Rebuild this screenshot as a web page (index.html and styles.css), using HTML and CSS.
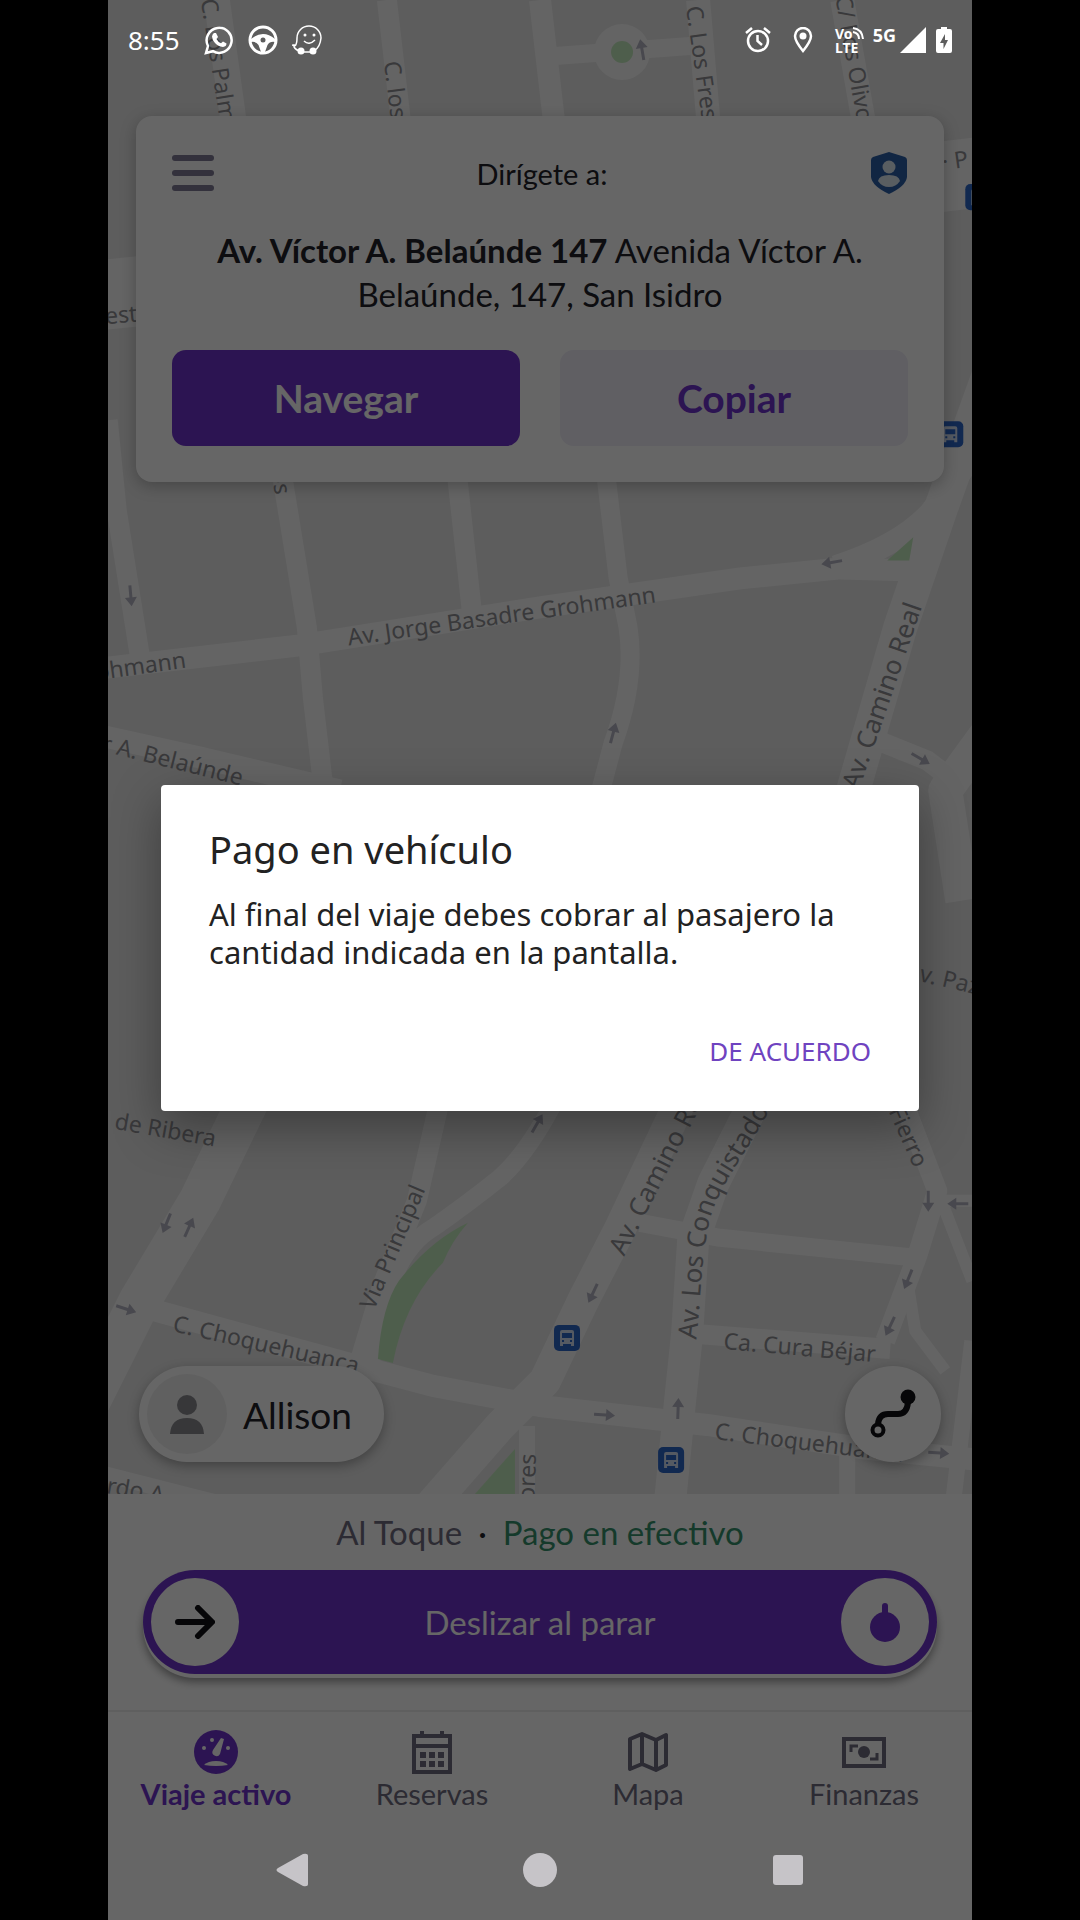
FILE: index.html
```html
<!DOCTYPE html>
<html lang="es">
<head>
    <meta charset="UTF-8">
    <meta name="viewport" content="width=device-width, initial-scale=1.0">
    <title>Viaje activo</title>
    <link rel="stylesheet" href="styles.css">
</head>
<body>
    <div class="phone">
        <section class="map-area">
            <svg class="map" viewBox="108 0 864 1493" preserveAspectRatio="xMidYMin slice" aria-hidden="true">
                <defs>
                    <path id="arrow" d="M-10 -1.500H2V-6L11 0L2 6V1.500H-10Z"/>
                    <g id="bus">
                        <rect width="26" height="26" rx="5" fill="#2c66c8"/>
                        <path d="M6 7q0-2 2-2h10q2 0 2 2v14h-3v-2H9v2H6z" fill="#d4e0f4"/>
                        <path d="M8 8h10v5H8zM8 15h2v2H8zM16 15h2v2h-2z" fill="#2c66c8"/>
                    </g>
                    <path id="conquistadores" d="M696 1339C701 1300 700 1265 709 1222C718 1185 745 1155 768 1112L810 1030"/>
                </defs>
                <!-- Streets -->
                <g class="roads">
                    <path stroke-width="22" d="M100 668L300 645L540 607L740 578L840 568L915 570"/>
                    <path stroke-width="22" d="M835 566Q900 545 930 512L985 440"/>
                    <path stroke-width="20" d="M108 420L117 510L140 655"/>
                    <path stroke-width="20" d="M270 400L288 510L307 627L313 697L325 800"/>
                    <path stroke-width="26" d="M217 0L235 130"/>
                    <path stroke-width="20" d="M387 0L402 130M452 430L458 483L472 612"/>
                    <path stroke-width="22" d="M540 0L555 130"/>
                    <path stroke-width="19" d="M603 450L618 577L628 627Q636 680 613 743L598 800"/>
                    <path stroke-width="18" d="M555 56L690 46"/>
                    <path stroke-width="24" d="M698 0L709 130M842 0L865 130"/>
                    <path stroke-width="70" d="M930 178L980 172M100 295L150 290"/>
                    <path stroke-width="34" d="M990 370L940 510L900 627L850 800"/>
                    <path stroke-width="22" d="M100 735L200 757L340 790"/>
                    <path stroke-width="20" d="M880 741L927 760L960 785"/>
                    <path stroke-width="34" d="M985 735L945 790L962 900"/>
                    <path stroke-width="32" d="M690 1080L620 1228L583 1300L545 1380L500 1425L430 1505"/>
                    <path stroke-width="32" d="M765 1080L713 1183L693 1240L687 1333L680 1400L670 1500"/>
                    <path stroke-width="18" d="M640 1222L720 1237L917 1257"/>
                    <path stroke-width="20" d="M695 1333L890 1348"/>
                    <path stroke-width="22" d="M120 1300L350 1363L433 1385L540 1405L707 1424L860 1447L980 1459"/>
                    <path stroke-width="42" d="M258 1080L200 1200L140 1300L90 1400"/>
                    <path stroke-width="20" d="M442 1090L417 1200L383 1283L357 1370"/>
                    <path stroke-width="18" d="M560 1090Q530 1150 500 1177Q465 1205 433 1227Q385 1255 370 1370"/>
                    <path stroke-width="20" d="M895 1080L937 1190L917 1255L885 1340"/>
                    <path stroke-width="12" d="M940 1200H980M943 1205L972 1280M907 1280L915 1330L945 1370"/>
                    <path stroke-width="16" d="M972 1340L953 1500M100 1472L230 1505M527 1425V1500M847 1450V1500"/>
                </g>
                <circle cx="622" cy="52" r="28" fill="#fafafa"/>
                <g fill="#c4ebbe">
                    <circle cx="622" cy="52" r="11"/>
                    <path d="M468 1222Q452 1240 443 1262Q405 1300 393 1362L378 1358Q382 1305 399 1280Q430 1240 468 1222Z"/>
                    <path d="M515 1448V1493H475Z"/>
                    <path d="M913 537L909 560H887Z"/>
                </g>
                <g fill="#b4b4c2">
                    <use href="#arrow" transform="translate(131 595) rotate(85)"/>
                    <use href="#arrow" transform="translate(832 562) rotate(170)"/>
                    <use href="#arrow" transform="translate(613 733) rotate(-75)"/>
                    <use href="#arrow" transform="translate(920 758) rotate(30)"/>
                    <use href="#arrow" transform="translate(167 1222) rotate(112)"/>
                    <use href="#arrow" transform="translate(189 1227) rotate(-66)"/>
                    <use href="#arrow" transform="translate(126 1308) rotate(18)"/>
                    <use href="#arrow" transform="translate(593 1292) rotate(115)"/>
                    <use href="#arrow" transform="translate(604 1414) rotate(4)"/>
                    <use href="#arrow" transform="translate(678 1408) rotate(-88)"/>
                    <use href="#arrow" transform="translate(928 1200) rotate(90)"/>
                    <use href="#arrow" transform="translate(958 1203) rotate(180)"/>
                    <use href="#arrow" transform="translate(908 1278) rotate(112)"/>
                    <use href="#arrow" transform="translate(890 1325) rotate(115)"/>
                    <use href="#arrow" transform="translate(938 1452) rotate(4)"/>
                    <use href="#arrow" transform="translate(642 50) rotate(-100)"/>
                    <use href="#arrow" transform="translate(537 1123) rotate(-60)"/>
                </g>
                <!-- Street names -->
                <g class="labels">
                    <text transform="translate(201 0) rotate(81)">C. Los Palmeras</text>
                    <text transform="translate(384 62) rotate(83)">C. los</text>
                    <text transform="translate(686 7) rotate(82)">C. Los Fresnos</text>
                    <text transform="translate(835 -3) rotate(80)">C/ Los Olivos</text>
                    <text transform="translate(943 170) rotate(-8)">· P</text>
                    <text transform="translate(106 324) rotate(-5)">est</text>
                    <text transform="translate(272 470) rotate(83)">os</text>
                    <text transform="translate(349 645) rotate(-8)">Av. Jorge Basadre Grohmann</text>
                    <text text-anchor="end" transform="translate(187 667) rotate(-8)">Grohmann</text>
                    <text text-anchor="end" transform="translate(241 785) rotate(14)">Víctor A. Belaúnde</text>
                    <text class="avenue" text-anchor="end" transform="translate(922 606) rotate(-71)">Av. Camino Real</text>
                    <text transform="translate(904 977) rotate(13)">Av. Paz</text>
                    <text transform="translate(114 1128) rotate(10)">de Ribera</text>
                    <text transform="translate(374 1310) rotate(-67)">Via Principal</text>
                    <text transform="translate(172 1330) rotate(13)">C. Choquehuanca</text>
                    <text class="avenue" transform="translate(624 1256) rotate(-63)">Av. Camino Real</text>
                    <text class="avenue"><textPath href="#conquistadores">Av. Los Conquistadores</textPath></text>
                    <text transform="translate(723 1348) rotate(5)">Ca. Cura Béjar</text>
                    <text transform="translate(714 1438) rotate(7)">C. Choquehuanca</text>
                    <text text-anchor="end" transform="translate(914 1168) rotate(66)">Fierro</text>
                    <text text-anchor="end" transform="translate(536 1453) rotate(-88)">Flores</text>
                    <text transform="translate(106 1492) rotate(10)">rdo A</text>
                </g>
                <use href="#bus" x="965" y="184"/>
                <use href="#bus" x="937" y="421"/>
                <use href="#bus" x="554" y="1324"/>
                <use href="#bus" x="658" y="1446"/>
            </svg>

            <div class="status-bar">
                <span class="time">8:55</span>
                <svg width="30" height="30" viewBox="0 0 30 30" fill="none" stroke="#fff" stroke-width="2.500">
                    <path d="M2 28L4 21A12.500 12.500 0 1 1 9 26.200Z"/>
                    <path d="M10 8l2 0 2 4-1.500 2q1.500 3 4.500 4.300l2-1.800 3.500 2q0 3-3.500 3.500-5-.5-8-4t-3-6.500q.5-3 2-3.500z" fill="#fff" stroke="none"/>
                </svg>
                <svg width="30" height="30" viewBox="0 0 30 30">
                    <circle cx="15" cy="15" r="13" fill="none" stroke="#fff" stroke-width="3"/>
                    <path d="M3 14Q9 9 15 9T27 14V17Q22 16 19.500 20L17 27H13L10.500 20Q8 16 3 17Z" fill="#fff"/>
                    <circle cx="15" cy="15" r="2.500" fill="#5d5d5d"/>
                </svg>
                <svg width="30" height="30" viewBox="0 0 30 30">
                    <path d="M3 21Q5 19 5 13A12 12 0 0 1 29 13Q28 22 23 25M3 21Q-1 20 2 20Q1 23 7 26M12 27H19" fill="none" stroke="#fff" stroke-width="1.500"/>
                    <circle cx="13" cy="10" r="1.500" fill="#fff"/>
                    <circle cx="22" cy="10" r="1.500" fill="#fff"/>
                    <path d="M12 16Q17 21 23 15" fill="none" stroke="#fff" stroke-width="1.500"/>
                    <circle cx="9" cy="26" r="3.500" fill="#fff"/>
                    <circle cx="21" cy="26" r="3.500" fill="#fff"/>
                </svg>
                <span class="spacer"></span>
                <svg class="alarm" width="26" height="28" viewBox="0 0 26 28" fill="none" stroke="#fff" stroke-width="2.500">
                    <circle cx="13" cy="15" r="10"/>
                    <path d="M12.500 9V15L17 19M1 7L7 2M25 7L19 2"/>
                </svg>
                <svg class="pin" width="20" height="26" viewBox="0 0 20 26">
                    <path d="M10 24Q2 14 2 9A8 8 0 0 1 18 9Q18 14 10 24Z" fill="none" stroke="#fff" stroke-width="2.500"/>
                    <circle cx="10" cy="9" r="3.500" fill="#fff"/>
                </svg>
                <svg width="28" height="28" viewBox="0 0 28 28" class="volte">
                    <text x="0" y="13">Vo</text>
                    <text x="0" y="27">LTE</text>
                    <path d="M18 6Q24 7 24 13M18 2Q27 3 28 13" fill="none" stroke="#fff" stroke-width="2"/>
                </svg>
                <span class="network">5G</span>
                <svg width="26" height="26" viewBox="0 0 26 26"><path d="M26 0V26H0Z" fill="#fff"/></svg>
                <svg class="battery" width="16" height="26" viewBox="0 0 16 26">
                    <path d="M5 0h6v2h3q2 0 2 2v20q0 2-2 2H2q-2 0-2-2V4q0-2 2-2h3z" fill="#fff"/>
                    <path d="M9 7L4 16H7.500V22L12 13H9Z" fill="#5d5d5d"/>
                </svg>
            </div>

            <div class="card">
                <div class="card-header">
                    <button class="icon-button menu" aria-label="Menú"><span></span><span></span><span></span></button>
                    <span class="card-title">Dirígete a:</span>
                    <button class="icon-button" aria-label="Seguridad">
                        <svg width="38" height="42" viewBox="-1 0 38 42">
                            <path d="M18 0L34 5Q36 6 36 8V25Q35 34 18 42Q1 34 0 25V8Q0 6 2 5Z" fill="#2c5fa8"/>
                            <circle cx="18" cy="15" r="6.500" fill="#dfeaf2"/>
                            <path d="M7 29Q8 23 18 23T29 29Q25 35 18 35T7 29Z" fill="#dfeaf2"/>
                        </svg>
                    </button>
                </div>
                <p class="address"><b>Av. Víctor A. Belaúnde 147</b> Avenida Víctor A. Belaúnde, 147, San Isidro</p>
                <div class="card-buttons">
                    <button class="primary">Navegar</button>
                    <button class="secondary">Copiar</button>
                </div>
            </div>

            <div class="map-footer">
                <button class="passenger">
                    <span class="avatar">
                        <svg width="36" height="40" viewBox="0 0 36 40" fill="#8a8a8f">
                            <circle cx="18" cy="11" r="10"/>
                            <path d="M1 40Q2 24 18 24T35 40Z"/>
                        </svg>
                    </span>
                    Allison
                </button>
                <button class="route" aria-label="Ruta">
                    <svg width="48" height="50" viewBox="0 0 48 50" fill="none" stroke="#101014" stroke-width="6">
                        <circle cx="9" cy="41" r="5.500" stroke-width="4"/>
                        <path d="M9 35Q10 25 19 25H29Q38 25 39 13"/>
                        <circle cx="39" cy="8" r="7.500" fill="#101014" stroke="none"/>
                    </svg>
                </button>
            </div>
        </section>

        <section class="trip">
            <p class="trip-info"><span>Al Toque</span><span class="dot">·</span><span class="cash">Pago en efectivo</span></p>
            <button class="slider">
                <span class="knob">
                    <svg width="40" height="34" viewBox="0 0 40 34" fill="none" stroke="#101014" stroke-width="6" stroke-linecap="round" stroke-linejoin="round">
                        <path d="M3 17H36M23 3L37 17L23 31"/>
                    </svg>
                </span>
                <span>Deslizar al parar</span>
                <span class="knob">
                    <svg width="32" height="40" viewBox="0 0 32 40" fill="#6f33cc">
                        <circle cx="16" cy="25" r="15"/>
                        <rect x="13" y="1" width="6" height="14" rx="3"/>
                    </svg>
                </span>
            </button>
        </section>

        <nav class="tabs">
            <a href="#" class="tab active">
                <svg width="44" height="44" viewBox="0 0 44 44">
                    <circle cx="22" cy="22" r="22" fill="#6f33cc"/>
                    <g fill="#fff">
                        <path d="M27 8L30 9L26 24A4 4 0 1 1 19 20Z"/>
                        <circle cx="10" cy="18" r="2"/><circle cx="18" cy="10" r="2"/><circle cx="34" cy="18" r="2"/>
                        <path d="M10 35Q14 31 22 31T34 35Q22 37 10 35Z"/>
                    </g>
                </svg>
                Viaje activo
            </a>
            <a href="#" class="tab">
                <svg width="44" height="44" viewBox="0 0 44 44" fill="none" stroke="#6f6c80" stroke-width="4">
                    <path d="M4 6H40V42H4ZM4 16H40M12 1V6M32 1V6"/>
                    <path d="M10 25H34M10 34H34" stroke-width="6" stroke-dasharray="6 3"/>
                </svg>
                Reservas
            </a>
            <a href="#" class="tab">
                <svg width="44" height="44" viewBox="0 0 44 44" fill="none" stroke="#6f6c80" stroke-width="4" stroke-linejoin="round">
                    <path d="M4 9L16 4L30 10L40 5V35L30 40L16 34L4 39ZM16 4V34M30 10V40"/>
                </svg>
                Mapa
            </a>
            <a href="#" class="tab">
                <svg width="44" height="44" viewBox="0 0 44 44" fill="none" stroke="#6f6c80" stroke-width="4">
                    <rect x="2" y="9" width="40" height="27"/>
                    <path d="M9 22V16H16M35 23V29H28" stroke-width="3"/>
                    <circle cx="22" cy="22" r="6" fill="#6f6c80" stroke="none"/>
                </svg>
                Finanzas
            </a>
        </nav>

        <div class="system-nav">
            <button aria-label="Atrás"><svg width="32" height="34" viewBox="0 0 32 34"><path d="M27 1Q32 0 32 3V31Q32 34 27 33L2 19Q-1 17 2 15Z"/></svg></button>
            <button aria-label="Inicio"><svg width="34" height="34" viewBox="0 0 34 34"><circle cx="17" cy="17" r="17"/></svg></button>
            <button aria-label="Recientes"><svg width="30" height="30" viewBox="0 0 30 30"><rect width="30" height="30" rx="3"/></svg></button>
        </div>

        <div class="scrim">
            <div class="dialog" role="dialog" aria-labelledby="dialog-title">
                <h1 id="dialog-title">Pago en vehículo</h1>
                <p>Al final del viaje debes cobrar al pasajero la cantidad indicada en la pantalla.</p>
                <button>DE ACUERDO</button>
            </div>
        </div>
    </div>
</body>
</html>
```
FILE: styles.css
```css
* {
    box-sizing: border-box;
}

body {
    margin: 0;
    background: #000;
    font-family: Lato, sans-serif;
    color: #222228;
}

p, h1 {
    margin: 0;
}

svg {
    display: block;
    flex-shrink: 0;
}

button {
    font-family: inherit;
    border: none;
    padding: 0;
    cursor: pointer;
}

.phone {
    position: relative;
    display: flex;
    flex-direction: column;
    width: 80%;
    min-height: 100vh;
    margin: 0 auto;
    background: #fff;
    overflow: hidden;
}

/* Map */
.map-area {
    position: relative;
    flex: 1;
    display: flex;
    flex-direction: column;
    background: #e8e8e8;
}

.map {
    position: absolute;
    top: 0;
    left: 0;
    width: 100%;
    height: 100%;
}

.roads {
    fill: none;
    stroke: #fafafa;
    stroke-linejoin: round;
}

.labels {
    font-family: "Noto Sans", sans-serif;
    font-size: 23px;
    fill: #8e8e93;
}

.avenue {
    font-size: 26px;
}

/* System bars stay lit above the scrim */
.status-bar {
    position: relative;
    z-index: 2;
    display: flex;
    align-items: center;
    gap: 14px;
    height: 80px;
    padding: 0 20px;
    color: #fff;
    font-family: "Noto Sans", sans-serif;
}

.time {
    font-size: 26px;
    margin-right: 10px;
}

.spacer {
    flex: 1;
}

.alarm, .pin {
    margin-right: 8px;
}

.volte {
    fill: #fff;
    font-size: 14px;
    font-weight: bold;
    overflow: visible;
}

.network {
    font-size: 18px;
    font-weight: bold;
    line-height: 20px;
    margin: 0 -10px 10px -4px;
}

.battery {
    margin-left: -4px;
}

.card {
    position: relative;
    margin: 36px 28px 0;
    padding: 36px;
    background: #fff;
    border-radius: 16px;
    box-shadow: 0 4px 16px rgba(0, 0, 0, 0.25);
    text-align: center;
}

.card-header {
    display: flex;
    align-items: center;
    justify-content: space-between;
    height: 42px;
}

.icon-button {
    background: none;
}

.menu {
    display: flex;
    flex-direction: column;
    gap: 9px;
    width: 42px;
}

.menu span {
    height: 6px;
    border-radius: 3px;
    background: #7f7b96;
}

.card-title {
    font-size: 29px;
}

.address {
    margin: 34px 36px;
    font-size: 33px;
    line-height: 44px;
}

.card-buttons {
    display: grid;
    grid-template-columns: 1fr 1fr;
    gap: 40px;
}

.card-buttons button {
    height: 96px;
    border-radius: 14px;
    font-size: 39px;
    font-weight: bold;
}

.card-buttons .primary {
    background: #6f33cc;
    color: #fff;
}

.card-buttons .secondary {
    background: #efedf8;
    color: #6f33cc;
}

.map-footer {
    position: relative;
    display: flex;
    align-items: center;
    justify-content: space-between;
    margin-top: auto;
    padding: 0 31px 32px;
}

.passenger {
    display: flex;
    align-items: center;
    gap: 16px;
    height: 96px;
    padding: 0 32px 0 8px;
    border-radius: 48px;
    background: #fff;
    box-shadow: 0 4px 12px rgba(0, 0, 0, 0.3);
    font-size: 37px;
    color: #222228;
}

.avatar {
    display: grid;
    place-items: center;
    width: 80px;
    height: 80px;
    border-radius: 50%;
    background: #f0f0f0;
}

.route {
    display: grid;
    place-items: center;
    width: 96px;
    height: 96px;
    border-radius: 50%;
    background: #fff;
    box-shadow: 0 4px 12px rgba(0, 0, 0, 0.3);
}

/* Trip panel */
.trip {
    padding: 16px 35px 36px;
    border-bottom: 2px solid #eee;
}

.trip-info {
    display: flex;
    justify-content: center;
    gap: 16px;
    font-size: 33px;
    line-height: 44px;
    color: #6f6c80;
}

.dot {
    color: #222228;
}

.cash {
    color: #35926c;
}

.slider {
    display: flex;
    align-items: center;
    justify-content: space-between;
    width: 100%;
    height: 104px;
    margin-top: 16px;
    padding: 0 8px;
    border-radius: 52px;
    background: #6f33cc;
    box-shadow: 0 4px 0 #fff, 0 8px 8px rgba(0, 0, 0, 0.4);
    font-size: 33px;
    color: #fff;
}

.knob {
    display: grid;
    place-items: center;
    width: 88px;
    height: 88px;
    border-radius: 50%;
    background: #fff;
}

.tabs {
    display: grid;
    grid-template-columns: repeat(4, 1fr);
    padding-top: 18px;
}

.tab {
    display: flex;
    flex-direction: column;
    align-items: center;
    gap: 2px;
    font-size: 29px;
    line-height: 36px;
    color: #6f6c80;
    text-decoration: none;
}

.active {
    color: #6f33cc;
    font-weight: bold;
}

.system-nav {
    position: relative;
    z-index: 2;
    display: grid;
    grid-template-columns: repeat(3, 1fr);
    height: 108px;
    padding: 8px 60px 0;
}

.system-nav button {
    display: grid;
    place-items: center;
    background: none;
}

.system-nav svg {
    fill: #c6c4c8;
}

/* Dialog */
.scrim {
    position: absolute;
    top: 0;
    right: 0;
    bottom: 0;
    left: 0;
    z-index: 1;
    display: flex;
    align-items: center;
    padding: 0 53px 24px;
    background: rgba(0, 0, 0, 0.6);
}

.dialog {
    display: flex;
    flex-direction: column;
    width: 100%;
    padding: 40px 48px;
    background: #fff;
    border-radius: 4px;
    box-shadow: 0 16px 48px rgba(0, 0, 0, 0.35);
    font-family: "Noto Sans", sans-serif;
    color: #222;
}

.dialog h1 {
    font-size: 38px;
    font-weight: normal;
    line-height: 48px;
}

.dialog p {
    margin-top: 22px;
    font-size: 31px;
    line-height: 38px;
}

.dialog button {
    align-self: flex-end;
    margin-top: 60px;
    background: none;
    font-size: 26px;
    line-height: 40px;
    color: #6f43c0;
}
```
